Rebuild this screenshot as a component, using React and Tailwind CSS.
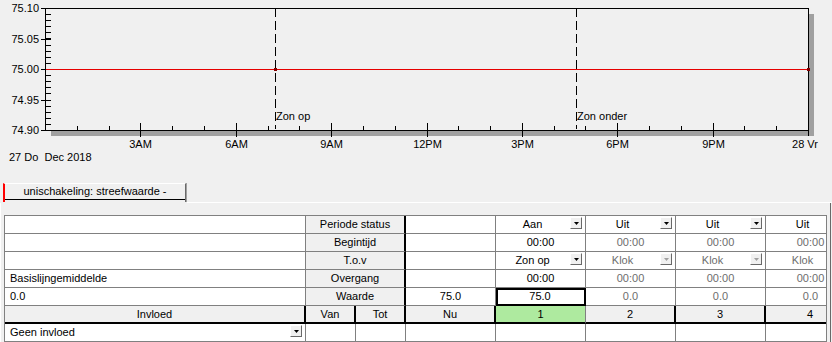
import React from "react";

const X0 = 45;
const X1 = 808;
const Y0 = 8;
const Y1 = 130;
const hx = (h) => X0 + (h * (X1 - X0)) / 24;
const vy = (v) => Y1 - ((v - 74.9) / 0.2) * (Y1 - Y0);

const Chart = () => {
  const minorY = [];
  for (let i = 0; i <= 20; i++) minorY.push(vy(74.9 + i * 0.01));
  const majorY = [75.1, 75.05, 75.0, 74.95, 74.9];
  const hours = [];
  for (let h = 1; h < 24; h++) hours.push(h);
  const labels = { 3: "3AM", 6: "6AM", 9: "9AM", 12: "12PM", 15: "3PM", 18: "6PM", 21: "9PM" };

  return (
    <svg width="832" height="176" className="block" shapeRendering="crispEdges">
      {/* shadow */}
      <rect x="51" y="131" width="763" height="5" fill="#a0a0a0" />
      <rect x="809" y="14" width="5" height="122" fill="#a0a0a0" />

      <line x1={X0} y1={Y0 + 0.5} x2={X1 + 1} y2={Y0 + 0.5} stroke="#000" />
      <line x1={X0} y1={Y1 + 0.5} x2={X1 + 1} y2={Y1 + 0.5} stroke="#000" />
      <line x1={X0 + 0.5} y1={Y0} x2={X0 + 0.5} y2={Y1 + 1} stroke="#000" />
      <line x1={X1 + 0.5} y1={Y0} x2={X1 + 0.5} y2={Y1 + 6} stroke="#000" />

      {minorY.map((y, i) => (
        <line key={i} x1={X0} y1={Math.round(y) + 0.5} x2={X0 + 6} y2={Math.round(y) + 0.5} stroke="#000" />
      ))}
      {majorY.map((v) => {
        const y = Math.round(vy(v));
        return (
          <g key={v}>
            <line x1={X0 - 4} y1={y + 0.5} x2={X0 + 6} y2={y + 0.5} stroke="#000" />
            <text x="39" y={y + 4} textAnchor="end" fontSize="11" fontFamily="Liberation Sans, Arial, sans-serif" fill="#000" shapeRendering="auto">
              {v.toFixed(2)}
            </text>
          </g>
        );
      })}

      {hours.map((h) => {
        const x = Math.round(hx(h)) + 0.5;
        const major = h % 3 === 0;
        return (
          <g key={h}>
            <line x1={x} y1={major ? 123 : 126} x2={x} y2={major ? 137 : 130} stroke="#000" />
            {labels[h] && (
              <text x={x} y="148" textAnchor="middle" fontSize="11" fontFamily="Liberation Sans, Arial, sans-serif" fill="#000">
                {labels[h]}
              </text>
            )}
          </g>
        );
      })}

      {/* sunrise / sunset */}
      <line x1="275.5" y1={Y0} x2="275.5" y2="129" stroke="#000" strokeDasharray="9 4" />
      <line x1="576.5" y1={Y0} x2="576.5" y2="129" stroke="#000" strokeDasharray="9 4" />
      <text x="276" y="120" fontSize="11" fontFamily="Liberation Sans, Arial, sans-serif" fill="#000">Zon op</text>
      <text x="577" y="120" fontSize="11" fontFamily="Liberation Sans, Arial, sans-serif" fill="#000">Zon onder</text>

      <line x1={X0 + 1} y1="69.5" x2={X1} y2="69.5" stroke="#e60000" />
      <rect x="274" y="68" width="3" height="3" fill="#800000" />
      <rect x="807" y="68" width="3" height="3" fill="#800000" />

      <text x="805" y="148" textAnchor="middle" fontSize="11" fontFamily="Liberation Sans, Arial, sans-serif" fill="#000">28 Vr</text>
      <text x="9" y="161" fontSize="11" fontFamily="Liberation Sans, Arial, sans-serif" fill="#000" style={{ whiteSpace: "pre" }}>
        27 Do  Dec 2018
      </text>
    </svg>
  );
};

const Drop = ({ disabled }) => (
  <span className="absolute right-[3px] top-[1px] w-[12px] h-[12px] bg-[#f0f0f0] border border-t-white border-l-white border-r-[#696969] border-b-[#696969] flex items-center justify-center">
    <svg width="5" height="3" className="block">
      <path d="M0 0h5L2.5 3z" fill={disabled ? "#a0a0a0" : "#000"} />
    </svg>
  </span>
);

const plain = "bg-white border-r border-b border-r-[#808080] border-b-[#808080]";
const btn = "bg-[#f0f0f0] border-r-2 border-b border-r-black border-b-[#808080]";
const hdr = "bg-[#f0f0f0] border-r-2 border-b-2 border-r-black border-b-black";
const green = "bg-[#aeea9f] border-r border-b-2 border-r-[#808080] border-b-black";
const sel = "bg-white border-r-2 border-b-2 border-r-black border-b-black shadow-[inset_2px_2px_0_#000]";

const Cell = ({ kind = plain, gray, drop, dropOff, left, children }) => (
  <div
    className={`relative h-[18px] flex items-center leading-none whitespace-nowrap ${kind} ${
      left ? "justify-start pl-[5px]" : "justify-center"
    } ${drop && !left ? "pr-[16px]" : ""} ${gray ? "text-[#6d6d6d]" : "text-black"}`}
  >
    {children}
    {drop && <Drop disabled={dropOff} />}
  </div>
);

const Split = ({ kind, a, b }) => (
  <div className="flex h-[18px]">
    <div className="w-[50px]">
      <Cell kind={kind}>{a}</Cell>
    </div>
    <div className="w-[50px]">
      <Cell kind={kind}>{b}</Cell>
    </div>
  </div>
);

const App = () => {
  return (
    <div className="w-[832px] h-[342px] bg-[#f0f0f0] overflow-hidden text-[11px] text-black font-['Liberation_Sans',Arial,sans-serif]">
      <Chart />

      {/* tab strip */}
      <div className="flex items-end h-[27px]">
        <div className="ml-[3px] mb-[1px] w-[183px] h-[19px] bg-[#f0f0f0] border-t border-t-white border-l-2 border-l-[#ff0000] border-r border-r-[#696969] shadow-[1px_0_0_#a0a0a0]">
          <div className="h-[16px] border-b border-b-black flex items-center justify-center leading-none">
            unischakeling: streefwaarde -
          </div>
        </div>
        <div className="flex-1 h-px bg-white ml-px" />
      </div>

      <div className="w-[831px] h-[140px] border-l border-l-white border-r border-r-[#696969] pt-[12px] pl-[3px]">
        <div className="w-[823px] h-[128px] border-t border-l border-r border-[#808080] overflow-hidden">
          <div className="grid grid-cols-[301px_100px_90px_90px_90px_90px_90px] w-[851px]">
            {/* Periode status */}
            <Cell />
            <Cell kind={btn}>Periode status</Cell>
            <Cell />
            <Cell drop>Aan</Cell>
            <Cell drop>Uit</Cell>
            <Cell drop>Uit</Cell>
            <Cell drop>Uit</Cell>

            {/* Begintijd */}
            <Cell />
            <Cell kind={btn}>Begintijd</Cell>
            <Cell />
            <Cell>00:00</Cell>
            <Cell gray>00:00</Cell>
            <Cell gray>00:00</Cell>
            <Cell gray>00:00</Cell>

            {/* T.o.v */}
            <Cell />
            <Cell kind={btn}>T.o.v</Cell>
            <Cell />
            <Cell drop>Zon op</Cell>
            <Cell gray drop dropOff>Klok</Cell>
            <Cell gray drop dropOff>Klok</Cell>
            <Cell gray drop dropOff>Klok</Cell>

            {/* Overgang */}
            <Cell left>Basislijngemiddelde</Cell>
            <Cell kind={btn}>Overgang</Cell>
            <Cell />
            <Cell>00:00</Cell>
            <Cell gray>00:00</Cell>
            <Cell gray>00:00</Cell>
            <Cell gray>00:00</Cell>

            {/* Waarde */}
            <Cell left>0.0</Cell>
            <Cell kind={btn}>Waarde</Cell>
            <Cell>75.0</Cell>
            <Cell kind={sel}>75.0</Cell>
            <Cell gray>0.0</Cell>
            <Cell gray>0.0</Cell>
            <Cell gray>0.0</Cell>

            {/* header row */}
            <Cell kind={hdr}>Invloed</Cell>
            <Split kind={hdr} a="Van" b="Tot" />
            <Cell kind={hdr}>Nu</Cell>
            <Cell kind={green}>1</Cell>
            <Cell kind={hdr}>2</Cell>
            <Cell kind={hdr}>3</Cell>
            <Cell kind={hdr}>4</Cell>

            {/* influence row */}
            <Cell left drop>Geen invloed</Cell>
            <Split kind={plain} />
            <Cell />
            <Cell />
            <Cell />
            <Cell />
            <Cell />
          </div>
        </div>
      </div>
    </div>
  );
};

export default App;
